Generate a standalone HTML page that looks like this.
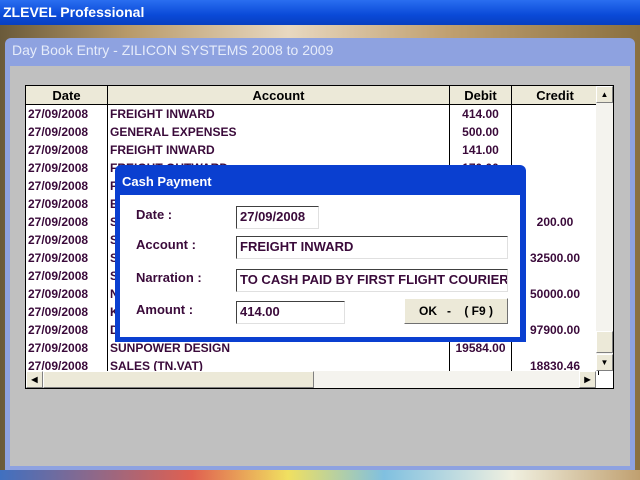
<!DOCTYPE html>
<html><head><style>
body{margin:0;width:640px;height:480px;overflow:hidden;position:relative;font-family:"Liberation Sans",sans-serif;font-weight:bold;
background:linear-gradient(90deg,#6a5a3a 0%,#b89a6a 20%,#e8d8c0 45%,#c0a070 70%,#8a7040 100%);}
.abs{position:absolute}
#tb{left:0;top:0;width:640px;height:25px;background:linear-gradient(#2a6ef0,#0a4ad8 60%,#0840c0);color:#fff;font-size:14px;line-height:25px;padding-left:3px;box-sizing:border-box}
#win{left:5px;top:38px;width:630px;height:432px;background:#8ea2e0;border-radius:6px 6px 0 0}
#wt{left:12px;top:42px;color:#e6ecfa;font-size:14px;font-weight:normal}
#wb{left:10px;top:66px;width:620px;height:400px;background:#c0c0c0}
#bot{left:0;top:470px;width:640px;height:10px;background:linear-gradient(90deg,#4070c0,#e06050 30%,#f0e060 45%,#80c0e0 60%,#f0f0e0 80%,#c0a070)}
#grid{left:25px;top:85px;width:589px;height:304px;background:#fff;border:1px solid #000;box-sizing:border-box;overflow:hidden}
table{border-collapse:collapse;position:absolute;left:0;top:0;font-size:12px;color:#3a0a3a}
td{height:18px;padding:0 2px;border-right:1px solid #000;white-space:nowrap;line-height:18px;overflow:hidden}
th{height:18px;background:#ece9d8;border-right:1px solid #000;border-bottom:1px solid #000;color:#000;font-size:13px;padding:0}
.r{text-align:center}
#vs{left:570px;top:0;width:17px;height:285px;background:#f4f3ee}
.btn{position:absolute;background:#ece9d8;border:1px solid;border-color:#fff #808080 #808080 #fff;box-sizing:border-box;font-size:8px;text-align:center;color:#000}
#hs{left:0;top:285px;width:570px;height:17px;background:#f4f3ee}
#dlg{left:115px;top:165px;width:411px;height:177px;background:#0a3fd0;border-radius:6px 6px 0 0}
#dt{left:122px;top:174px;color:#fff;font-size:13px}
#db{left:120px;top:195px;width:400px;height:142px;background:#fff}
.lb{position:absolute;font-size:13px;color:#3a0a3a}
.in{position:absolute;border:1px solid;border-color:#404040 #e0e0e0 #e0e0e0 #404040;background:#fff;font-size:13px;color:#3a0a3a;line-height:20px;padding-left:3px;box-sizing:border-box;height:23px;white-space:nowrap;overflow:hidden}
</style></head><body>
<div id="tb" class="abs">ZLEVEL Professional</div>
<div id="win" class="abs"></div>
<div id="wt" class="abs">Day Book Entry - ZILICON SYSTEMS 2008 to 2009</div>
<div id="wb" class="abs"></div>
<div id="bot" class="abs"></div>
<div id="grid" class="abs">
<table>
<tr><th style="width:81px">Date</th><th style="width:341px">Account</th><th style="width:61px">Debit</th><th style="width:86px">Credit</th></tr>
<tr><td>27/09/2008</td><td>FREIGHT INWARD</td><td class="r">414.00</td><td></td></tr>
<tr><td>27/09/2008</td><td>GENERAL EXPENSES</td><td class="r">500.00</td><td></td></tr>
<tr><td>27/09/2008</td><td>FREIGHT INWARD</td><td class="r">141.00</td><td></td></tr>
<tr><td>27/09/2008</td><td>FREIGHT OUTWARD</td><td class="r">170.00</td><td></td></tr>
<tr><td>27/09/2008</td><td>F</td><td></td><td></td></tr>
<tr><td>27/09/2008</td><td>E</td><td></td><td></td></tr>
<tr><td>27/09/2008</td><td>S</td><td></td><td class="r">200.00</td></tr>
<tr><td>27/09/2008</td><td>S</td><td></td><td></td></tr>
<tr><td>27/09/2008</td><td>S</td><td></td><td class="r">32500.00</td></tr>
<tr><td>27/09/2008</td><td>S</td><td></td><td></td></tr>
<tr><td>27/09/2008</td><td>N</td><td></td><td class="r">50000.00</td></tr>
<tr><td>27/09/2008</td><td>K</td><td></td><td></td></tr>
<tr><td>27/09/2008</td><td>D</td><td></td><td class="r">97900.00</td></tr>
<tr><td>27/09/2008</td><td>SUNPOWER DESIGN</td><td class="r">19584.00</td><td></td></tr>
<tr><td>27/09/2008</td><td>SALES (TN.VAT)</td><td></td><td class="r">18830.46</td></tr>
</table>
<div id="vs" class="abs">
<div class="btn" style="left:0;top:0;width:17px;height:17px;line-height:15px">▲</div>
<div class="btn" style="left:0;top:245px;width:17px;height:22px"></div>
<div class="btn" style="left:0;top:268px;width:17px;height:17px;line-height:15px">▼</div>
</div>
<div id="hs" class="abs">
<div class="btn" style="left:0;top:0;width:17px;height:17px;line-height:15px">◀</div>
<div class="btn" style="left:17px;top:0;width:271px;height:17px"></div>
<div class="btn" style="left:553px;top:0;width:17px;height:17px;line-height:15px">▶</div>
</div>
</div>
<div id="dlg" class="abs"></div>
<div id="dt" class="abs">Cash Payment</div>
<div id="db" class="abs"></div>
<div class="lb" style="left:136px;top:207px">Date :</div>
<div class="lb" style="left:136px;top:237px">Account :</div>
<div class="lb" style="left:136px;top:270px">Narration :</div>
<div class="lb" style="left:136px;top:302px">Amount :</div>
<div class="in" style="left:236px;top:206px;width:83px">27/09/2008</div>
<div class="in" style="left:236px;top:236px;width:272px">FREIGHT INWARD</div>
<div class="in" style="left:236px;top:269px;width:272px">TO CASH PAID BY FIRST FLIGHT COURIER</div>
<div class="in" style="left:236px;top:301px;width:109px">414.00</div>
<div class="btn" style="left:404px;top:298px;width:104px;height:26px;font-size:12px;line-height:24px;font-weight:bold;border-color:#fff #707070 #707070 #fff">OK &nbsp; - &nbsp; &nbsp;( F9 )</div>
</body></html>
